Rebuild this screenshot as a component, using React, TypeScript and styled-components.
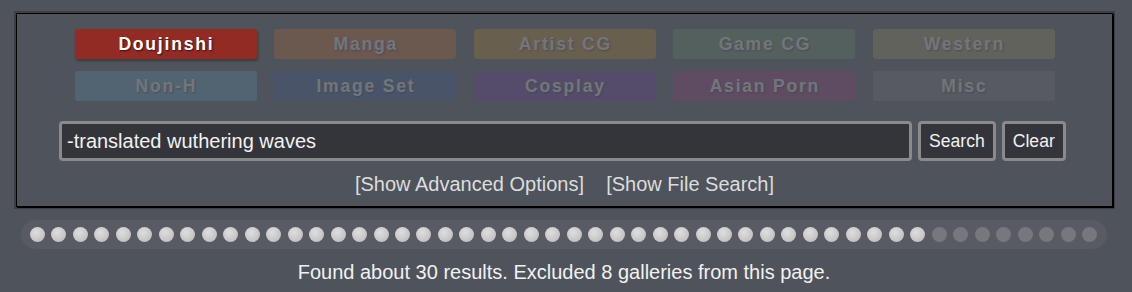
import React from "react";
import styled, { createGlobalStyle } from "styled-components";

const GlobalStyle = createGlobalStyle`
  html, body {
    margin: 0;
    padding: 0;
    background: #4f535b;
    font-family: "Liberation Sans", Arial, sans-serif;
    color: #f1f1f1;
  }
`;

const Page = styled.div`
  width: 1128px;
  padding-top: 13px;
`;

const Panel = styled.div`
  box-sizing: border-box;
  width: 1097px;
  margin-left: 16px;
  border: 1px solid #000;
  box-shadow: 1px 1px 0 #000, 0 0 0 2px #3d3f45;
  padding: 15px 0 10px;
`;

const CategoryGrid = styled.div`
  display: grid;
  grid-template-columns: repeat(5, 182px);
  column-gap: 17.5px;
  row-gap: 12px;
  justify-content: center;
`;

const CategoryButton = styled.div<{ $color: string; $off?: boolean }>`
  height: 30px;
  border-radius: 3px;
  background: ${(p) => p.$color};
  opacity: ${(p) => (p.$off ? 0.2 : 1)};
  color: #fff;
  font-weight: bold;
  font-size: 17.6px;
  letter-spacing: 1.76px;
  text-indent: 1.76px;
  display: flex;
  align-items: center;
  justify-content: center;
  text-shadow: 1px 1px 2px rgba(0, 0, 0, 0.65);
  box-shadow: ${(p) => (p.$off ? "none" : "1px 2px 3px rgba(0,0,0,0.3)")};
`;

const SearchRow = styled.div`
  display: flex;
  gap: 6px;
  margin-top: 20px;
  padding-left: 42px;
`;

const SearchInput = styled.div`
  box-sizing: border-box;
  width: 853px;
  height: 40px;
  border: 3px solid #8a8a8c;
  border-radius: 4px;
  background: #34353b;
  color: #f1f1f1;
  font-size: 20px;
  display: flex;
  align-items: center;
  padding-left: 5px;
`;

const ActionButton = styled.div`
  box-sizing: border-box;
  height: 40px;
  border: 3px solid #8a8a8c;
  border-radius: 4px;
  background: #34353b;
  color: #f1f1f1;
  font-size: 17.6px;
  padding: 0 8px;
  display: flex;
  align-items: center;
`;

const LinkRow = styled.div`
  margin-top: 12px;
  text-align: center;
  font-size: 20px;
  line-height: 23px;
  color: #dddddd;
  white-space: pre;
`;

const DotBar = styled.div`
  box-sizing: border-box;
  width: 1086px;
  height: 29px;
  margin: 13px 0 0 21px;
  border-radius: 15px;
  background: #585b63;
  display: flex;
  align-items: center;
  justify-content: space-between;
  padding: 0 10px 0 9px;
`;

const Dot = styled.div<{ $dim?: boolean }>`
  width: 15px;
  height: 15px;
  border-radius: 50%;
  background: ${(p) =>
    p.$dim
      ? "#77787e"
      : "radial-gradient(circle at 40% 35%, #dedede 0%, #c9c9c9 55%, #b4b4b4 100%)"};
`;

const ResultText = styled.div`
  margin-top: 12px;
  text-align: center;
  font-size: 20px;
  line-height: 23px;
  color: #f1f1f1;
`;

const categories: { name: string; color: string; off: boolean }[] = [
  { name: "Doujinshi", color: "#932b25", off: false },
  { name: "Manga", color: "#db6c24", off: true },
  { name: "Artist CG", color: "#d38f1d", off: true },
  { name: "Game CG", color: "#6a936d", off: true },
  { name: "Western", color: "#ab9f60", off: true },
  { name: "Non-H", color: "#5fa9cf", off: true },
  { name: "Image Set", color: "#325ca2", off: true },
  { name: "Cosplay", color: "#6a32a2", off: true },
  { name: "Asian Porn", color: "#a23282", off: true },
  { name: "Misc", color: "#777777", off: true },
];

export default function App() {
  const dots = Array.from({ length: 50 }, (_, i) => i >= 42);
  return (
    <>
      <GlobalStyle />
      <Page>
        <Panel>
          <CategoryGrid>
            {categories.map((c) => (
              <CategoryButton key={c.name} $color={c.color} $off={c.off}>
                {c.name}
              </CategoryButton>
            ))}
          </CategoryGrid>
          <SearchRow>
            <SearchInput>-translated wuthering waves</SearchInput>
            <ActionButton>Search</ActionButton>
            <ActionButton>Clear</ActionButton>
          </SearchRow>
          <LinkRow>{"[Show Advanced Options]\u00a0 \u00a0 [Show File Search]"}</LinkRow>
        </Panel>
        <DotBar>
          {dots.map((dim, i) => (
            <Dot key={i} $dim={dim} />
          ))}
        </DotBar>
        <ResultText>Found about 30 results. Excluded 8 galleries from this page.</ResultText>
      </Page>
    </>
  );
}
